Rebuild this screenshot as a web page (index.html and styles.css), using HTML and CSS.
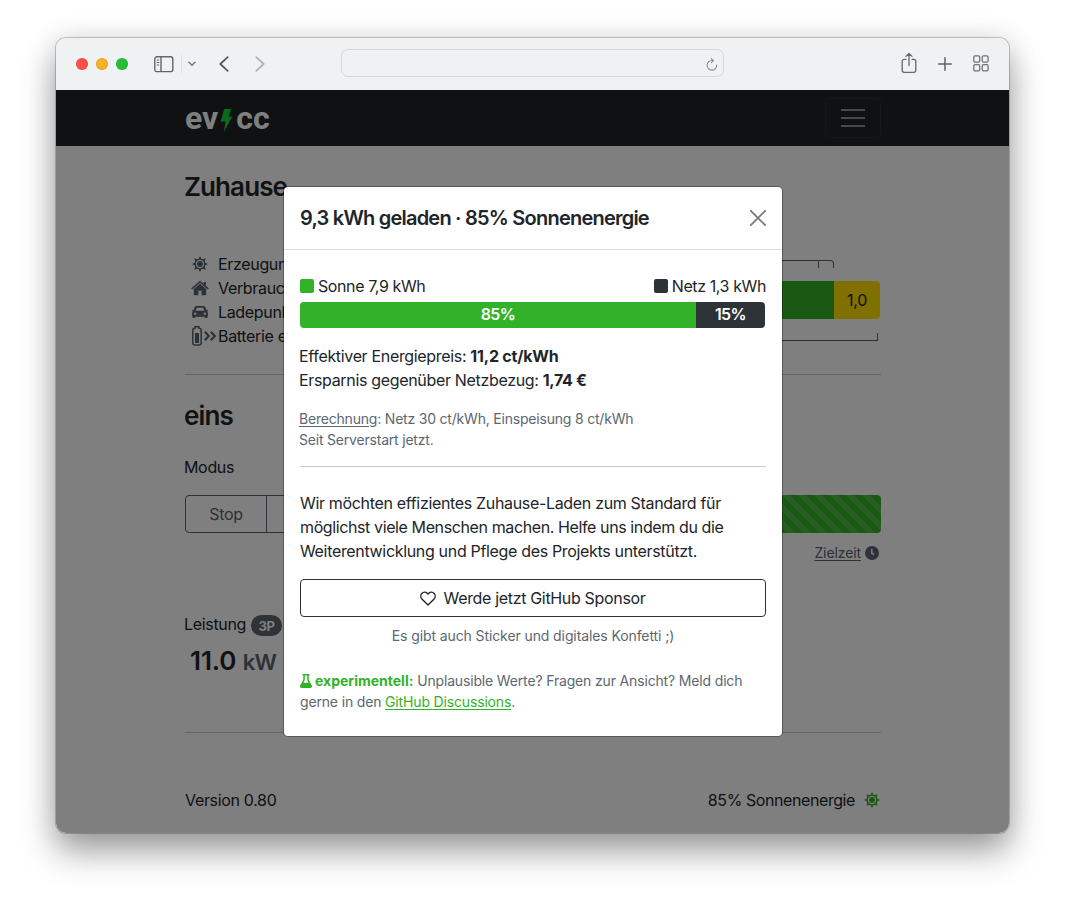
FILE: index.html
```
<!DOCTYPE html>
<html lang="de">
<head>
<meta charset="utf-8">
<title>evcc</title>
<link rel="stylesheet" href="styles.css">
</head>
<body>
<svg width="0" height="0" class="defs">
  <symbol id="sun" viewBox="0 0 16 16"><g fill="currentColor"><path id="ray" d="M6.200 3.500 8 0l1.800 3.500ZM6.200 12.500 8 16l1.800-3.500ZM3.500 6.200 0 8l3.500 1.800ZM12.500 6.200 16 8l-3.500 1.800Z"/><use href="#ray" transform="rotate(45 8 8)"/><circle cx="8" cy="8" r="2.900"/></g><circle cx="8" cy="8" r="4.800" fill="none" stroke="currentColor" stroke-width="1.300"/></symbol>
</svg>
<div class="window">
  <header class="toolbar">
    <div class="lights"><i class="red"></i><i class="amber"></i><i class="green"></i></div>
    <svg class="sidebar-icon" width="20" height="17" viewBox="0 0 20 17" fill="none" stroke="#646568" stroke-width="1.4"><rect x=".8" y=".8" width="18" height="14.8" rx="2.2"/><path d="M7 1v14.5"/><path d="M2.8 4h2.4M2.8 6.5h2.4M2.8 9h2.4" stroke-width="1"/></svg>
    <span class="divider"></span>
    <svg class="chevron" width="8" height="6" viewBox="0 0 8 6" fill="none" stroke="#77787b" stroke-width="1.5" stroke-linecap="round" stroke-linejoin="round"><path d="M1 1.2 4 4.2 7 1.2"/></svg>
    <svg class="back" width="10" height="16" viewBox="0 0 10 16" fill="none" stroke="#56575a" stroke-width="1.7" stroke-linecap="round" stroke-linejoin="round"><path d="M8.7 1.2 1.3 8l7.4 6.8"/></svg>
    <svg class="forward" width="10" height="16" viewBox="0 0 10 16" fill="none" stroke="#b0b1b3" stroke-width="1.7" stroke-linecap="round" stroke-linejoin="round"><path d="M1.3 1.2 8.7 8l-7.4 6.8"/></svg>
    <div class="address"><svg width="12" height="13" viewBox="0 0 12 13" fill="none" stroke="#8b8c8e" stroke-width="1.1" stroke-linecap="round"><path d="M10.7 7A4.8 4.8 0 1 1 6 2.5h1M5.2.8 7.4 2.6 5.4 4.6"/></svg></div>
    <div class="actions">
      <svg width="16" height="22" viewBox="0 0 16 22" fill="none" stroke="#66676a" stroke-width="1.3" stroke-linecap="round" stroke-linejoin="round"><path d="M5 7.3H3.2A2 2 0 0 0 1.2 9.3v9a2 2 0 0 0 2 2h9.6a2 2 0 0 0 2-2v-9a2 2 0 0 0-2-2H11M8 13.5V1.7M5 4.4 8 1.5l3 2.9"/></svg>
      <svg width="14" height="14" viewBox="0 0 14 14" stroke="#5e5f62" stroke-width="1.5" stroke-linecap="round"><path d="M7 .8v12.4M.8 7h12.4"/></svg>
      <svg width="16" height="17" viewBox="0 0 16 17" fill="none" stroke="#727376" stroke-width="1.3"><rect x=".8" y=".9" width="5.9" height="6.2" rx="1.3"/><rect x="9.2" y=".9" width="5.9" height="6.2" rx="1.3"/><rect x=".8" y="9.6" width="5.9" height="6.2" rx="1.3"/><rect x="9.2" y="9.6" width="5.9" height="6.2" rx="1.3"/></svg>
    </div>
  </header>
  <div class="viewport">
    <nav class="navbar">
      <div class="logo"><span>ev</span><svg width="13" height="23" viewBox="0 0 13 23"><path fill="#14d63c" d="M4.3 0H11L8.6 7.5H12.3L3.8 23 5.6 12.4H.6Z"/></svg><span>cc</span></div>
      <div class="burger"><i></i><i></i><i></i></div>
    </nav>
    <main class="page">
      <h1 class="site">Zuhause</h1>
      <section class="energy">
        <ul class="flows">
          <li><svg width="16" height="16"><use href="#sun"/></svg><span>Erzeugung</span></li>
          <li><svg width="18" height="16" viewBox="0 0 18 16" fill="currentColor"><path d="M9 3.8 15.2 9v5.6a.6.6 0 0 1-.6.6h-4v-4.4H7.4v4.4h-4a.6.6 0 0 1-.6-.6V9ZM9 .8l3.7 3.1V2h2.2v3.8L17.8 8.2l-1 1.2L9 2.8 1.2 9.4.2 8.2Z"/></svg><span>Verbrauch</span></li>
          <li><svg width="16" height="14" viewBox="0 0 16 14" fill="currentColor"><path fill-rule="evenodd" d="M4.5 1h7c1 0 1.6.5 2 1.5L14.4 5H15.8v1.3l-.8.3c.6.5.9 1 .9 1.8v2.3c0 .5-.2.8-.6 1V13h-2.6v-1.3H3.3V13H.7v-1.3c-.4-.2-.6-.5-.6-1V8.400c0-.8.3-1.300.9-1.800l-.8-.3V5h1.400L2.500 2.500C2.900 1.500 3.500 1 4.500 1ZM4.800 2.800 3.700 5.700h8.600l-1.100-2.900ZM3.200 7.500a1.200 1.200 0 1 0 0 2.400 1.200 1.200 0 0 0 0-2.400ZM12.800 7.500a1.200 1.200 0 1 0 0 2.400 1.200 1.200 0 0 0 0-2.400Z"/></svg><span>Ladepunkt</span></li>
          <li><svg class="battery" width="26" height="20" viewBox="0 0 26 20" fill="none" stroke="currentColor"><path stroke-width="1.500" d="M4 2.300V.8h4v1.500h.5a1.700 1.700 0 0 1 1.700 1.700v13.300A1.700 1.700 0 0 1 8.500 19h-5a1.700 1.700 0 0 1-1.700-1.700V4a1.700 1.700 0 0 1 1.700-1.700Z"/><path fill="currentColor" stroke="none" d="M4 7h4v10H4Z"/><path stroke-width="2.200" d="m13.800 5.800 4 4.200-4 4.200m6-8.400 4 4.200-4 4.200"/></svg><span>Batterie entladen</span></li>
        </ul>
        <div class="graph">
          <div class="bracket top"><i></i></div>
          <div class="mix"><div class="self"></div><div class="feed">1,0</div></div>
          <div class="bracket bottom"></div>
        </div>
      </section>
      <hr class="rule">
      <section class="loadpoint">
        <h2>eins</h2>
        <div class="labels">Modus</div>
        <div class="controls"><div class="modes"><span>Stop</span><span></span></div><div class="charge"></div></div>
        <div class="target"><u>Zielzeit</u><svg width="14" height="14" viewBox="0 0 14 14"><circle cx="7" cy="7" r="7" fill="currentColor"/><path d="M6.800 3v4.300l2.300 1.400" fill="none" stroke="#fff" stroke-width="1.500"/></svg></div>
        <div class="power"><span>Leistung</span><b>3P</b></div>
        <div class="value">11.0 <small>kW</small></div>
      </section>
      <hr class="rule">
      <footer class="foot"><span class="version">Version 0.80</span><span class="solar">85% Sonnenenergie<svg width="16" height="16"><use href="#sun"/></svg></span></footer>
    </main>
    <div class="backdrop"></div>
  </div>
</div>
<div class="modal">
  <div class="modal-head"><h3>9,3 kWh geladen · 85% Sonnenenergie</h3><svg width="16" height="16" viewBox="0 0 16 16" stroke="#7d7d7d" stroke-width="1.900" stroke-linecap="round"><path d="m.8.8 14.400 14.400M15.200.8.8 15.200"/></svg></div>
  <div class="modal-body">
    <div class="legend"><span><i></i>Sonne 7,9 kWh</span><span class="grid"><i></i>Netz 1,3 kWh</span></div>
    <div class="share"><b class="share-sun">85%</b><b class="share-grid">15%</b></div>
    <div class="prices"><div class="price-a">Effektiver Energiepreis: <b>11,2 ct/kWh</b></div><div class="price-b">Ersparnis gegenüber Netzbezug: <b>1,74 €</b></div></div>
    <div class="small calc"><div><u>Berechnung</u>: Netz 30 ct/kWh, Einspeisung 8 ct/kWh</div><div>Seit Serverstart jetzt.</div></div>
    <hr class="rule">
    <p class="pitch">Wir möchten effizientes Zuhause-Laden zum Standard für<br><span>möglichst viele Menschen machen. Helfe uns indem du die</span><br>Weiterentwicklung und Pflege des Projekts unterstützt.</p>
    <div class="sponsor"><svg width="16" height="15" viewBox="0 0 16 15" fill="none" stroke="currentColor" stroke-width="1.400" stroke-linejoin="round"><path d="M8 13.900 1.900 7.900C.5 6.400.4 3.900 1.800 2.400 3.400.7 5.800.8 7.200 2.200l.8.8.8-.8C10.200.8 12.600.7 14.200 2.400c1.400 1.500 1.300 4-.1 5.500Z"/></svg><span>Werde jetzt GitHub Sponsor</span></div>
    <div class="small sticker">Es gibt auch Sticker und digitales Konfetti ;)</div>
    <div class="small exp"><div><svg width="12" height="14" viewBox="0 0 12 14" fill="currentColor"><path fill-rule="evenodd" d="M2.500 0h7v1.500h-.8v4.200l3.100 5.800c.6 1.200 0 2.500-1.300 2.500h-9C.2 14-.4 12.700.2 11.500l3.100-5.800V1.500h-.8ZM4.800 1.500v4.600L3.500 8.700h5L7.200 6.100V1.500Z"/></svg><b>experimentell:</b> Unplausible Werte? Fragen zur Ansicht? Meld dich</div><div>gerne in den <u>GitHub Discussions</u>.</div></div>
  </div>
</div>
</body>
</html>
```
FILE: styles.css
```
* { box-sizing: border-box; }
body { margin: 0; width: 1065px; height: 907px; overflow: hidden; position: relative; background: #fff; padding: 38px 56px; font: 16px/24px Inter, "Liberation Sans", sans-serif; letter-spacing: -0.33px; color: #212529; }
h1, h2, h3, p, ul { margin: 0; padding: 0; }
svg { display: block; flex: none; }
.defs { position: absolute; }
.window { width: 953px; height: 795px; border-radius: 10px; overflow: hidden; box-shadow: 0 0 0 1px rgba(0,0,0,.2), 0 18px 34px rgba(0,0,0,.38), 0 0 30px rgba(0,0,0,.1); }
.toolbar { height: 52px; background: #f0f1f3; display: flex; align-items: center; padding: 0 20px 0 20px; }
.lights { display: flex; gap: 8px; margin-right: 26px; }
.lights i { width: 12px; height: 12px; border-radius: 50%; border: 1px solid rgba(0,0,0,.1); }
.red { background: #ff5049; } .amber { background: #fdb024; } .green { background: #24c138; }
.divider { width: 1px; height: 18px; background: #dddee0; margin: 0 6px 0 7px; }
.back { margin: -1px 0 0 23px; }
.forward { margin: -1px 1px 0 26px; }
.address { width: 383px; height: 28px; border: 1px solid #d5d6d8; border-radius: 7px; margin: -2px 0 0 75px; display: flex; justify-content: flex-end; align-items: center; padding: 3px 5px 0 0; }
.actions { margin-left: auto; display: flex; align-items: center; gap: 21px; margin-top: -1px; }
.actions svg:first-child { margin-top: -2px; }
.viewport { position: relative; height: 743px; background: #fff; }
.backdrop { position: absolute; inset: 0; background: rgba(0,0,0,.5); }
.navbar { height: 56px; background: #1f2226; padding: 0 128px 0 129px; display: flex; align-items: center; justify-content: space-between; }
.logo { display: flex; align-items: center; font: 700 32px/40px Roboto, sans-serif; letter-spacing: 0; color: #fff; }
.logo svg { margin: 4px 3px 0 2px; }
.burger { width: 56px; height: 40px; border: 1px solid #2b2e32; border-radius: 5px; display: flex; flex-direction: column; gap: 6px; justify-content: center; align-items: center; }
.burger i { width: 24px; height: 2px; background: #909294; }
.page { padding: 0 128px 0 129px; }
h1, h2 { font-weight: 600; font-size: 26px; line-height: 32px; letter-spacing: -0.9px; margin-left: -1px; }
.site { padding-top: 25px; height: 106px; }
.energy { display: flex; height: 122px; }
.flows { list-style: none; width: 340px; }
.flows li { display: flex; height: 24px; align-items: center; gap: 3px; }
.flows svg { margin: 0 auto; color: #59646e; }
.flows .battery { margin: 0 -2px 0 auto; }
.flows span { width: 307px; }
.graph { flex: 1; padding-top: 8px; }
.bracket { border: 1px solid #59646e; height: 8px; }
.bracket.top { width: 309px; border-bottom: 0; border-radius: 4px 4px 0 0; display: flex; justify-content: flex-end; padding-right: 14px; }
.bracket.top i { width: 1px; background: #59646e; }
.mix { display: flex; height: 38px; margin: 13px 1px 14px 0; border-radius: 4px; overflow: hidden; }
.self { flex: 1; background: #32b228; }
.feed { width: 46px; background: #ffe000; line-height: 38px; text-align: center; }
.bracket.bottom { border-top: 0; width: 353px; }
.rule { border: 0; height: 1px; margin: 0; background: #c8cacc; }
.loadpoint { height: 357px; padding-top: 25px; }
.labels { margin: 23px 0 0 -1px; }
.controls { display: flex; justify-content: space-between; margin-top: 16px; }
.modes { display: flex; width: 310px; height: 38px; border: 1px solid #59646e; border-radius: 4px; color: #59646e; line-height: 36px; text-align: center; }
.modes span:first-child { width: 81px; border-right: 1px solid #59646e; }
.charge { width: 340px; border-radius: 4px; background: linear-gradient(45deg, rgba(255,255,255,.15) 25%, transparent 25%, transparent 50%, rgba(255,255,255,.15) 50%, rgba(255,255,255,.15) 75%, transparent 75%) 0 0/16px 16px #32b228; }
.target { display: flex; justify-content: flex-end; align-items: center; gap: 4px; padding-right: 2px; height: 21px; margin-top: 9px; font-size: 14px; letter-spacing: -.1px; color: #59646e; }
.target u, .small u { text-underline-offset: 2px; }
.power { display: flex; align-items: center; gap: 5px; margin: 48px 0 0 -1px; height: 25px; }
.power b { height: 21px; width: 31px; margin-top: 3px; border-radius: 11px; background: #5c6770; color: #fff; font-size: 13px; line-height: 22px; text-align: center; }
.value { padding-left: 5px; font-weight: 600; font-size: 26px; line-height: 38px; letter-spacing: -.1px; margin-top: 6px; }
.value small { font-size: 22px; color: #59646e; letter-spacing: -.9px; }
.foot { display: flex; justify-content: space-between; padding-top: 55px; }
.solar { display: flex; align-items: center; gap: 9px; padding-right: 1px; letter-spacing: -.42px; }
.solar svg { color: #32b228; }
.modal { position: absolute; left: 284px; top: 187px; width: 498px; height: 549px; background: #fff; border-radius: 4px; box-shadow: 0 0 0 1px rgba(0,0,0,.3); }
.modal-head { height: 63px; border-bottom: 1px solid #dcdee0; display: flex; justify-content: space-between; align-items: center; padding: 0 16px; }
h3 { font-size: 20px; line-height: 30px; font-weight: 600; letter-spacing: -.78px; }
.modal-body { padding: 24px 16px; }
.legend { display: flex; justify-content: space-between; letter-spacing: -.4px; }
.legend span { display: flex; align-items: center; gap: 4px; }
.legend i { width: 14px; height: 14px; border-radius: 2px; background: #32b228; }
.legend .grid i { background: #2e3338; }
.share { display: flex; height: 26px; width: 465px; margin-top: 4px; border-radius: 4px; overflow: hidden; color: #fff; line-height: 25px; text-align: center; }
.share b { font-weight: 600; letter-spacing: -.6px; }
.share-sun { width: 396px; background: #32b228; }
.share-grid { flex: 1; background: #2e3338; }
.prices { margin: 16px 0 0 -1px; }
.price-a b { letter-spacing: -.2px; }
.small { font-size: 14px; line-height: 21px; letter-spacing: -.1px; color: #5c6770; }
.calc { margin: 16px 0 16px -1px; letter-spacing: -.2px; }
.pitch { margin: 24px 0 16px; white-space: nowrap; }
.pitch span { letter-spacing: -.39px; }
.sponsor { height: 38px; border: 1px solid #2e3338; border-radius: 4px; display: flex; justify-content: center; align-items: center; gap: 8px; padding-right: 1px; }
.sticker { margin-top: 8px; text-align: center; }
.exp { margin-top: 24px; white-space: nowrap; letter-spacing: -.16px; }
.exp b { letter-spacing: 0; }
.exp svg { display: inline-block; vertical-align: -2px; margin-right: 3px; }
.exp svg, .exp b, .exp u { color: #32b228; }
```
